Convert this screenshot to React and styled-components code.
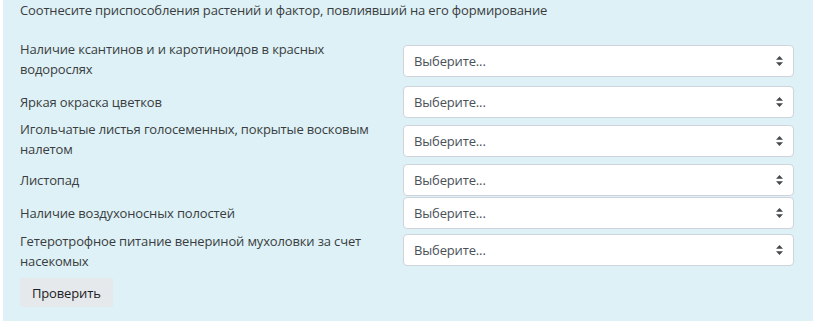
import React from 'react';
import styled, { createGlobalStyle } from 'styled-components';

const GlobalStyle = createGlobalStyle`
  body {
    margin: 0;
    background: #ffffff;
    font-family: "Open Sans", "Noto Sans", sans-serif;
  }
`;

const Panel = styled.div`
  margin-left: 3px;
  width: 810px;
  height: 321px;
  box-sizing: border-box;
  background: #def1f7;
  padding: 0 19px 0 17px;
  color: #3a3d40;
  font-size: 13px;
  letter-spacing: -0.15px;
  line-height: 20px;
`;

const Prompt = styled.div`
  height: 20px;
  margin-bottom: 19px;
`;

const Row = styled.div`
  display: flex;
  align-items: center;
  margin-top: ${p => p.$mt}px;
`;

const Label = styled.div`
  width: 383px;
  flex: none;
  box-sizing: border-box;
  padding-right: 12px;
`;

const SelectWrap = styled.div`
  position: relative;
  width: 391px;
  height: 32px;
  margin-top: ${p => p.$shift}px;
`;

const Select = styled.select`
  appearance: none;
  -webkit-appearance: none;
  width: 100%;
  height: 100%;
  box-sizing: border-box;
  border: 1px solid #ced4da;
  border-radius: 4px;
  background: #ffffff;
  padding: 0 28px 0 10px;
  font-family: "Open Sans", "Noto Sans", sans-serif;
  font-size: 13px;
  letter-spacing: -0.15px;
  color: #495057;
  outline: none;
`;

const Arrow = styled.svg`
  position: absolute;
  right: 11px;
  top: 50%;
  transform: translateY(-50%);
  pointer-events: none;
`;

const CheckButton = styled.button`
  margin-top: 7px;
  height: 29px;
  padding: 0 12px;
  border: none;
  border-radius: 0;
  background: #e6e9eb;
  color: #1d2125;
  font-family: "Open Sans", "Noto Sans", sans-serif;
  font-size: 13px;
  letter-spacing: -0.15px;
  cursor: pointer;
`;

const items = [
  { text: 'Наличие ксантинов и и каротиноидов в красных водорослях', mt: 0, shift: 4 },
  { text: 'Яркая окраска цветков', mt: 7, shift: 0 },
  { text: 'Игольчатые листья голосеменных, покрытые восковым налетом', mt: 1, shift: 3 },
  { text: 'Листопад', mt: 5, shift: 0 },
  { text: 'Наличие воздухоносных полостей', mt: 1, shift: 0 },
  { text: 'Гетеротрофное питание венериной мухоловки за счет насекомых', mt: 2, shift: -3 },
];

function ChoiceSelect({ shift }) {
  return (
    <SelectWrap $shift={shift}>
      <Select defaultValue="">
        <option value="">Выберите...</option>
      </Select>
      <Arrow width="7" height="10" viewBox="0 0 7 10">
        <path d="M3.5 0 L7 3.8 H0 Z M3.5 10 L7 6.2 H0 Z" fill="#45494d" />
      </Arrow>
    </SelectWrap>
  );
}

export default function App() {
  return (
    <>
      <GlobalStyle />
      <Panel>
        <Prompt>Соотнесите приспособления растений и фактор, повлиявший на его формирование</Prompt>
        {items.map(it => (
          <Row key={it.text} $mt={it.mt}>
            <Label>{it.text}</Label>
            <ChoiceSelect shift={it.shift} />
          </Row>
        ))}
        <CheckButton>Проверить</CheckButton>
      </Panel>
    </>
  );
}
